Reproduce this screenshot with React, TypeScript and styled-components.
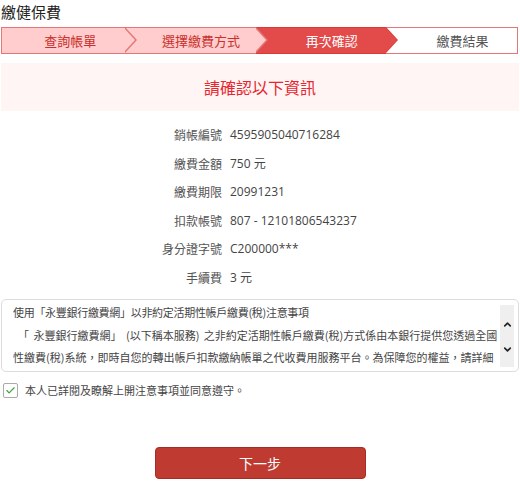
import { FC, Fragment } from 'react'
import styled, { createGlobalStyle, css } from 'styled-components'
import { Check, ChevronUp, ChevronDown } from 'lucide-react'

const GlobalStyle = createGlobalStyle`
  html, body {
    margin: 0;
    padding: 0;
    background: #fff;
  }
  body {
    font-family: "Open Sans", "Noto Sans CJK TC", sans-serif;
    color: #333;
  }
`

const Page = styled.div`
  width: 520px;
  box-sizing: border-box;
  padding: 0 1px;
`

const Title = styled.h1`
  margin: 0 0 5px 0;
  padding-top: 1px;
  font-size: 15px;
  line-height: 21px;
  font-weight: normal;
  color: #222;
  font-family: "Noto Sans CJK TC", sans-serif;
`

const Steps = styled.div`
  display: flex;
  height: 27px;
  margin-right: 1px;
`

type StepKind = 'done' | 'active' | 'todo'

const fills: Record<StepKind, string> = {
  done: '#ffcdcd',
  active: '#e34a4a',
  todo: '#ffffff',
}

const Step = styled.div<{ $kind: StepKind; $z: number; $arrow: boolean; $first: boolean; $last: boolean }>`
  flex: 1;
  position: relative;
  z-index: ${(p) => p.$z};
  box-sizing: border-box;
  display: flex;
  align-items: center;
  justify-content: center;
  font-size: 13px;
  font-family: "Noto Sans CJK TC", sans-serif;
  background: ${(p) => fills[p.$kind]};
  border-top: 1px solid ${(p) => (p.$kind === 'active' ? '#d83a3a' : '#e57676')};
  border-bottom: 1px solid ${(p) => (p.$kind === 'active' ? '#d83a3a' : '#e57676')};
  border-left: ${(p) => (p.$first ? '1px solid #e57676' : 'none')};
  border-right: ${(p) => (p.$last ? '1px solid #e57676' : 'none')};
  color: ${(p) => (p.$kind === 'active' ? '#fff' : p.$kind === 'done' ? '#c9302c' : '#555')};
  padding-left: ${(p) => (p.$first ? '14px' : '22px')};

  ${(p) =>
    p.$arrow &&
    css`
      &::before {
        content: '';
        position: absolute;
        top: -1px;
        right: -12px;
        width: 0;
        height: 0;
        border-top: 13.5px solid transparent;
        border-bottom: 13.5px solid transparent;
        border-left: 12px solid ${p.$kind === 'active' ? '#d83a3a' : '#e57676'};
      }
      &::after {
        content: '';
        position: absolute;
        top: 0;
        right: -10.5px;
        width: 0;
        height: 0;
        border-top: 12.5px solid transparent;
        border-bottom: 12.5px solid transparent;
        border-left: 11.1px solid ${fills[p.$kind]};
      }
    `}
`

const Banner = styled.div`
  margin-top: 9px;
  height: 48px;
  background: #fff5f5;
  display: flex;
  align-items: center;
  justify-content: center;
  font-size: 16px;
  color: #e8262e;
  font-family: "Noto Sans CJK TC", sans-serif;
`

const Details = styled.div`
  margin-top: 10px;
  display: grid;
  grid-template-columns: 221px 1fr;
  column-gap: 8px;
`

const Label = styled.div`
  height: 28.5px;
  line-height: 28.5px;
  text-align: right;
  font-size: 12px;
  color: #555;
  font-family: "Noto Sans CJK TC", sans-serif;
`

const Value = styled.div`
  height: 28.5px;
  line-height: 28.5px;
  font-size: 12px;
  color: #444;
`

const Notice = styled.div`
  margin-top: 7px;
  height: 73px;
  box-sizing: border-box;
  border: 1px solid #ddd;
  border-radius: 5px;
  display: flex;
  padding: 1px 4px 0 11px;
`

const NoticeText = styled.div`
  flex: 1;
  overflow: hidden;
  font-size: 11px;
  line-height: 22.5px;
  color: #444;
  font-family: "Noto Sans CJK TC", sans-serif;
`

const NoticeLine = styled.div<{ $indent?: boolean; $tight?: boolean }>`
  white-space: nowrap;
  ${(p) =>
    p.$tight &&
    css`
      letter-spacing: -0.3px;
    `}
  ${(p) =>
    p.$indent &&
    css`
      padding-left: 5px;
      word-spacing: 2px;
    `}
`

const Scrollbar = styled.div`
  width: 14px;
  margin: 4px 0 4px 2px;
  background: #efefef;
  display: flex;
  flex-direction: column;
  align-items: center;
  justify-content: center;
  gap: 14px;
  padding-top: 1px;
  color: #222;
`

const Agree = styled.label`
  margin-top: 10px;
  display: flex;
  align-items: center;
  gap: 7px;
  padding-left: 2px;
  font-size: 11px;
  color: #444;
  font-family: "Noto Sans CJK TC", sans-serif;
`

const Box = styled.span`
  width: 13px;
  height: 13px;
  border: 1px solid #aaa;
  border-radius: 2px;
  display: flex;
  align-items: center;
  justify-content: center;
  color: #3aa23a;
`

const Actions = styled.div`
  margin-top: 49px;
  display: flex;
  justify-content: center;
`

const NextButton = styled.button`
  width: 211px;
  height: 32px;
  background: #bf3a31;
  border: 1px solid #a82c24;
  border-radius: 4px;
  color: #fff;
  font-size: 14px;
  font-family: "Noto Sans CJK TC", sans-serif;
  cursor: pointer;
`

const steps: { text: string; kind: StepKind }[] = [
  { text: '查詢帳單', kind: 'done' },
  { text: '選擇繳費方式', kind: 'done' },
  { text: '再次確認', kind: 'active' },
  { text: '繳費結果', kind: 'todo' },
]

const details = [
  ['銷帳編號', '4595905040716284'],
  ['繳費金額', '750 元'],
  ['繳費期限', '20991231'],
  ['扣款帳號', '807 - 12101806543237'],
  ['身分證字號', 'C200000***'],
  ['手續費', '3 元'],
]

const App: FC = () => {
  return (
    <Page>
      <GlobalStyle />
      <Title>繳健保費</Title>
      <Steps>
        {steps.map((s, i) => (
          <Step
            key={s.text}
            $kind={s.kind}
            $z={steps.length - i}
            $arrow={i < steps.length - 1}
            $first={i === 0}
            $last={i === steps.length - 1}
          >
            {s.text}
          </Step>
        ))}
      </Steps>
      <Banner>請確認以下資訊</Banner>
      <Details>
        {details.map(([label, value]) => (
          <Fragment key={label}>
            <Label>{label}</Label>
            <Value>{value}</Value>
          </Fragment>
        ))}
      </Details>
      <Notice>
        <NoticeText>
          <NoticeLine $tight>使用「永豐銀行繳費網」以非約定活期性帳戶繳費(稅)注意事項</NoticeLine>
          <NoticeLine $indent>「 永豐銀行繳費網」 (以下稱本服務) 之非約定活期性帳戶繳費(稅)方式係由本銀行提供您透過全國</NoticeLine>
          <NoticeLine>性繳費(稅)系統，即時自您的轉出帳戶扣款繳納帳單之代收費用服務平台。為保障您的權益，請詳細</NoticeLine>
        </NoticeText>
        <Scrollbar>
          <ChevronUp size={11} strokeWidth={3.5} />
          <ChevronDown size={11} strokeWidth={3.5} />
        </Scrollbar>
      </Notice>
      <Agree>
        <Box>
          <Check size={11} strokeWidth={2.5} />
        </Box>
        本人已詳閱及瞭解上開注意事項並同意遵守。
      </Agree>
      <Actions>
        <NextButton>下一步</NextButton>
      </Actions>
    </Page>
  )
}

export default App
